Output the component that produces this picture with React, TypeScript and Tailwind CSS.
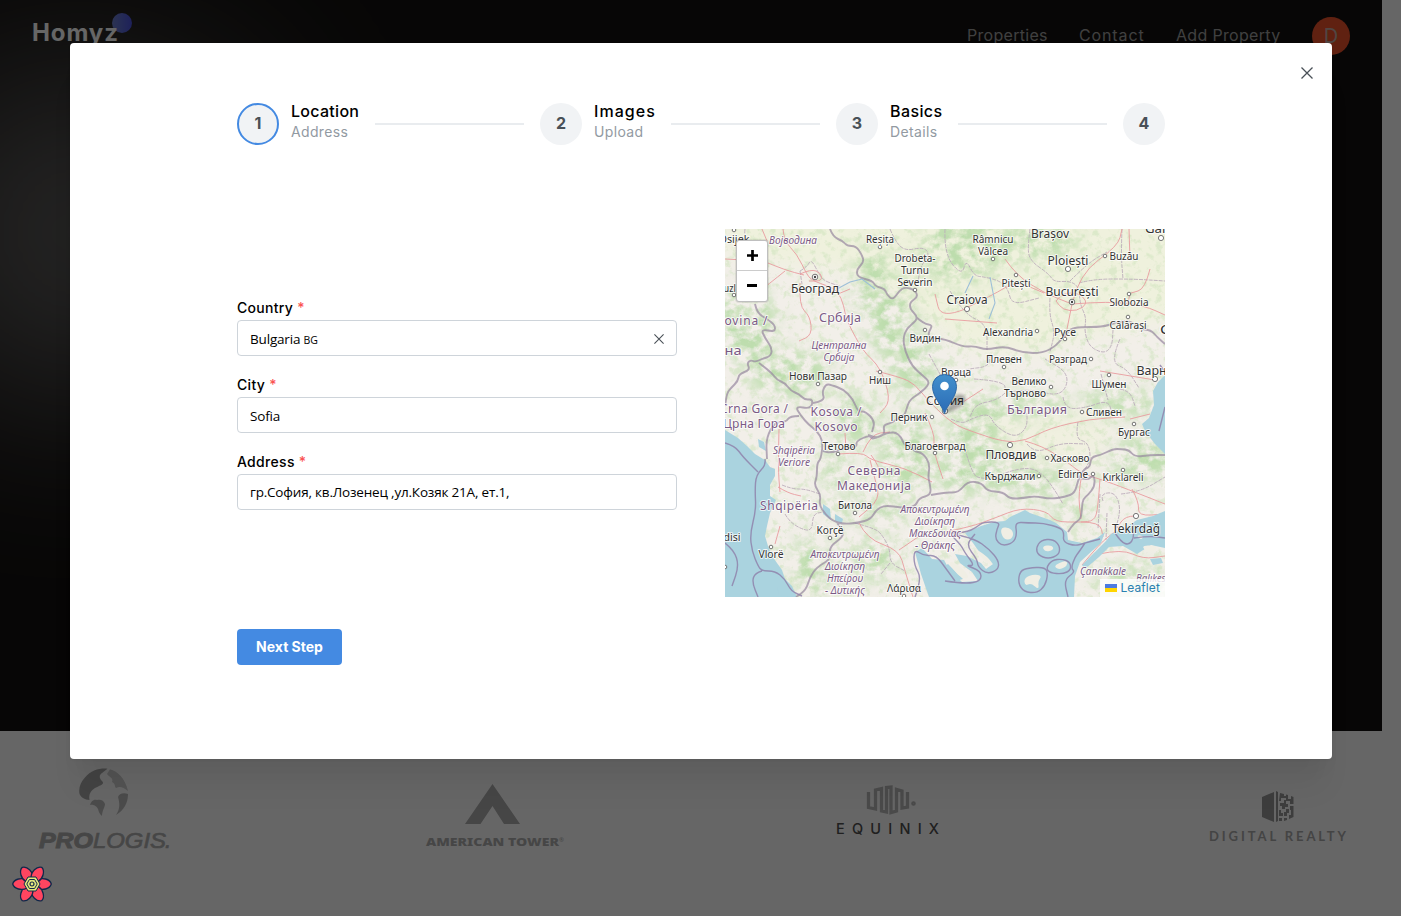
import React from "react";

const steps = [
  { n: 1, title: "Location", note: "Address", active: true, text: "w-[68px]", track: "tracking-[0.018em]" },
  { n: 2, title: "Images", note: "Upload", active: false, text: "w-[61px]", track: "tracking-[0.065em]" },
  { n: 3, title: "Basics", note: "Details", active: false, text: "w-[52px]", track: "tracking-[0.025em]" },
  { n: 4, title: "", note: "", active: false, text: "", track: "" },
];

function Close({ size }: { size: number }) {
  return (
    <svg width={size} height={size} viewBox="0 0 12 12" fill="none" stroke="#495057" strokeWidth="1.3">
      <path d="M.5.5 11.5 11.5M11.5.5.5 11.5" />
    </svg>
  );
}

function Stepper() {
  return (
    <div className="flex h-[42px] items-center">
      {steps.map((s) => (
        <React.Fragment key={s.n}>
          <div className="flex items-center">
            <div
              className={
                s.active
                  ? "flex size-[42px] items-center justify-center rounded-full border-2 border-[#448ae2] bg-[#f1f3f5] pb-0.5 text-base font-bold text-[#495057]"
                  : "flex size-[42px] items-center justify-center rounded-full bg-[#f1f3f5] pb-0.5 text-base font-bold text-[#495057]"
              }
            >
              {s.n}
            </div>
            {s.title && (
              <div className={`-mt-2 ml-3 whitespace-nowrap ${s.text}`}>
                <div className={`text-base leading-[22px] font-medium text-black ${s.track}`}>{s.title}</div>
                <div className="text-sm leading-[19px] tracking-[0.025em] text-[#929aa2]">{s.note}</div>
              </div>
            )}
          </div>
          {s.n < 4 && <div className="mx-4 h-[2px] flex-1 bg-[#e9ecef]" />}
        </React.Fragment>
      ))}
    </div>
  );
}

function Field({ label, gap, children }: { label: string; gap: string; children: React.ReactNode }) {
  return (
    <div className={gap}>
      <div className="h-[22px] text-sm leading-[21px] font-medium tracking-[0.022em] text-black">
        {label} <span className="text-[#fa5252]">*</span>
      </div>
      <div className="mt-px flex h-9 items-center justify-between rounded border border-[#ced4da] bg-white px-3 pt-px font-['Open_Sans','Noto_Sans',sans-serif] text-[13.5px] tracking-[-0.013em] text-black">
        {children}
      </div>
    </div>
  );
}

// Rounds the corners of an "M x y x y ... [Z]" path with quadratic curves.
function smooth(d: string): string {
  return d
    .split("M")
    .filter((part) => part.trim())
    .map((part) => {
      const closed = part.includes("Z");
      const n = (part.match(/-?[\d.]+/g) || []).map(Number);
      const p: [number, number][] = [];
      for (let i = 0; i + 1 < n.length; i += 2) p.push([n[i], n[i + 1]]);
      const mid = (a: [number, number], b: [number, number]) => `${(a[0] + b[0]) / 2} ${(a[1] + b[1]) / 2}`;
      if (closed) {
        const k = p.length;
        return `M${mid(p[k - 1], p[0])}` + p.map((q, i) => `Q${q[0]} ${q[1]} ${mid(q, p[(i + 1) % k])}`).join("") + "Z";
      }
      let out = `M${p[0][0]} ${p[0][1]}`;
      for (let i = 1; i < p.length - 1; i++) out += `Q${p[i][0]} ${p[i][1]} ${mid(p[i], p[i + 1])}`;
      const last = p[p.length - 1];
      return out + `L${last[0]} ${last[1]}`;
    })
    .join("");
}

type Label = [number, number, number, number, string];

// centre x, baseline y, width, font size, text
const cities: Label[] = [
  [9, 14, 31, 11, "Osijek"],
  [5, 63, 22, 11, "Tuzla"],
  [155, 14, 28, 10.5, "Reșița"],
  [190, 33, 41, 10.5, "Drobeta-"],
  [190, 45, 28, 10.5, "Turnu"],
  [190, 57, 35, 10.5, "Severin"],
  [90, 64, 48, 12.5, "Београд"],
  [200, 113, 31, 10.5, "Видин"],
  [93, 151, 58, 10.5, "Нови Пазар"],
  [155, 155, 22, 10.5, "Ниш"],
  [268, 14, 41, 10.5, "Râmnicu"],
  [268, 26, 30, 10.5, "Vâlcea"],
  [325, 9, 38, 12.5, "Brașov"],
  [343, 36, 41, 12.5, "Ploiești"],
  [399, 31, 29, 10.5, "Buzău"],
  [438, 4, 36, 12.5, "Galați"],
  [291, 58, 29, 10.5, "Pitești"],
  [347, 67, 53, 12.5, "București"],
  [242, 75, 41, 12.5, "Craiova"],
  [404, 77, 39, 10.5, "Slobozia"],
  [403, 100, 37, 10.5, "Călărași"],
  [440, 105, 10, 12, "C"],
  [283, 107, 50, 10.5, "Alexandria"],
  [340, 107, 22, 10.5, "Русе"],
  [279, 134, 36, 10.5, "Плевен"],
  [343, 134, 38, 10.5, "Разград"],
  [231, 147, 30, 10.5, "Враца"],
  [304, 156, 35, 10.5, "Велико"],
  [300, 168, 42, 10.5, "Търново"],
  [384, 159, 35, 10.5, "Шумен"],
  [430, 146, 37, 12.5, "Варна"],
  [379, 187, 36, 10.5, "Сливен"],
  [220, 176, 38, 12, "София"],
  [184, 192, 37, 10.5, "Перник"],
  [114, 221, 33, 10.5, "Тетово"],
  [210, 221, 61, 10.5, "Благоевград"],
  [286, 230, 51, 12.5, "Пловдив"],
  [345, 233, 39, 10.5, "Хасково"],
  [285, 251, 51, 10.5, "Кърджали"],
  [348, 249, 30, 10.5, "Edirne"],
  [398, 252, 41, 10.5, "Kırklareli"],
  [409, 207, 32, 10.5, "Бургас"],
  [130, 280, 34, 10.5, "Битола"],
  [105, 305, 27, 10.5, "Korçë"],
  [46, 329, 25, 10.5, "Vlorë"],
  [7, 312, 17, 10.5, "disi"],
  [411, 304, 48, 12.5, "Tekirdağ"],
  [179, 363, 34, 10.5, "Λάρισα"],
];

const countries: Label[] = [
  [115, 93, 42, 12.5, "Србија"],
  [21, 96, 43, 12, "ovina /"],
  [8, 126, 17, 12, "на"],
  [29, 184, 68, 12, "Crna Gora /"],
  [29, 199, 62, 12, "Црна Гора"],
  [111, 187, 51, 12, "Kosova /"],
  [111, 202, 43, 12, "Kosovo"],
  [149, 246, 53, 12, "Северна"],
  [149, 261, 74, 12, "Македонија"],
  [64, 281, 58, 12, "Shqipëria"],
  [312, 185, 60, 12.5, "България"],
];

const regions: Label[] = [
  [68, 15, 48, 10.5, "Војводина"],
  [114, 120, 55, 10.5, "Централна"],
  [114, 132, 31, 10.5, "Србија"],
  [69, 225, 42, 10.5, "Shqipëria"],
  [69, 237, 32, 10.5, "Veriore"],
  [210, 284, 69, 10, "Αποκεντρωμένη"],
  [210, 296, 40, 10, "Διοίκηση"],
  [210, 308, 52, 10, "Μακεδονίας"],
  [210, 320, 40, 10, "- Θράκης"],
  [120, 329, 69, 10, "Αποκεντρωμένη"],
  [120, 341, 40, 10, "Διοίκηση"],
  [120, 353, 36, 10, "Ηπείρου"],
  [120, 365, 40, 10, "- Δυτικής"],
  [378, 346, 46, 10.5, "Çanakkale"],
  [429, 353, 36, 10, "Balıkesir"],
];

const dots: [number, number, number][] = [
  [9, 1, 1.8], [9, 66, 1.8], [155, 18, 1.8], [190, 61, 1.8], [200, 101, 1.8], [93, 155, 1.8], [155, 143, 1.8],
  [268, 30, 1.8], [291, 46, 1.8], [343, 40, 2.6], [380, 27, 1.8], [436, 9, 2.6], [242, 80, 2.6], [404, 65, 1.8],
  [403, 88, 1.8], [312, 102, 1.8], [340, 110, 1.8], [279, 138, 1.8], [366, 130, 1.8], [326, 158, 1.8], [384, 146, 1.8],
  [430, 150, 2.6], [357, 183, 1.8], [207, 188, 1.8], [113, 225, 1.8], [210, 224, 1.8], [285, 216, 2.6], [322, 229, 1.8],
  [314, 247, 1.8], [368, 245, 1.8], [398, 241, 1.8], [409, 195, 1.8], [130, 284, 1.8], [105, 309, 1.8], [46, 318, 1.8],
  [411, 287, 2.6], [231, 151, 1.8], [0, 338, 1.8], [179, 367, 1.8],
];

const ADRIATIC =
  "M0 201 13 209 22 217 30 225 40 231 45 238 50 240 50 247 45 256 45 267 51 271 45 284 42 297 40 307 43 317 47 327 57 341 60 350 67 357 72 368 0 368Z";
const AEGEAN =
  "M204 368 196 345 190 323 197 319 207 330 219 331 224 340 237 353 253 352 247 343 235 334 230 325 242 327 256 334 261 340 268 335 255 324 248 314 240 304 256 297 269 293 280 292 285 288 300 281 305 284 325 291 331 294 342 303 343 311 357 314 372 309 380 303 376 314 367 322 355 333 350 347 349 368Z";
const MARMARA =
  "M440 282 428 287 412 291 398 300 386 305 381 312 369 324 357 336 360 340 374 328 384 318 398 317 412 325 426 316 440 319Z";

const SEA_BORDERS = smooth(
  "M0 214 10 217 18 228 33 243M40 230 41 236 31 246 30 262 31 281 25 305 27 322 33 337 37 342 50 342 60 350 66 362 77 367M37 342 30 344 27 353 33 368M0 314 9 321 14 337 7 357M190 368 197 350 189 336 189 320 199 327 211 326 222 341 230 352M220 352 240 355 256 352 256 342 240 336 250 337 240 324 236 316 224 304 250 310 264 320 274 332 273 341 262 345 253 338 252 330 241 316 250 305M224 304 240 304 252 298 258 293 275 293 272 300 270 310 277 317 288 314 292 306 290 293 303 294 318 294 336 299 339 304 338 313 350 317 360 314 375 310M360 314 354 323 350 328 346 339 350 343 339 351 343 368M390 304 396 313 404 316 409 309 408 295M409 309 425 307 440 309M440 143 435 136M440 178 434 202"
);
const ISLAND_BORDERS = smooth(
  "M311 319 316 311 328 310 335 317 334 326 323 330 313 326ZM321 339 327 331 337 330 345 333 346 341 338 345 325 344ZM295 342 303 339 320 338 323 345 320 357 312 364 299 363 293 354Z"
);
const STATE_BORDERS = smooth(
  "M105 0 108 8 118 12 122 17 131 17 137 26 139 33 132 40 132 48 148 52 150 57 160 60 162 66 168 71 174 62 180 58 190 61 193 68 185 73 185 80 192 87 191 92 182 99 178 109 180 122 187 137 197 146 206 154 194 165 184 171 180 186 176 187 167 194 158 196 160 205 152 209 143 206M191 88 199 95 208 96 203 104 205 109 220 110 238 118 250 117 261 121 280 117 298 124 318 124 331 117 338 108 345 100 355 98 377 98 390 94 405 91 414 100 426 101 432 108 440 115M30 75 32 84 42 90 50 96 50 103 36 100 40 109 47 119 46 127 37 130 30 133 26 131 22 134 25 141 14 145 13 152 6 159 2 164 0 177M34 134 46 143 52 151 60 154 66 162 74 165 80 171 88 170 86 180 70 177 76 187 84 196 92 202 98 212 96 230 92 234 92 248 89 256 96 266 94 276 101 286 108 292 118 295 133 294 146 290 151 281 160 276 177 279 190 278 194 269 206 266 205 255 203 248 205 235 198 224 188 222 183 211 181 219 174 204 163 203 147 211 145 206 131 212 132 218 120 219 106 224 98 222M88 174 100 172 97 163 101 155 106 156 118 160 128 170 133 183 140 182 150 192 147 203M74 187 65 187 61 193 50 193 41 209 42 230M206 266 220 263 233 264 243 252 257 254 262 262 278 263 285 270 299 269 310 267 325 270 340 268 350 264 353 251 359 240 365 238 366 228 376 226 388 220 396 220 404 221 410 228 425 226 440 226M353 248 362 252 369 245 370 257 363 266 358 270 357 278 356 290 349 294 343 303M112 294 118 301 118 308 104 318 106 330 92 338 85 348 81 361 71 368"
);
const COUNTY_BORDERS = smooth(
  "M20 0 18 20 34 28 42 45 30 58 0 62M75 42 82 38 86 30 93 43 98 51 108 55 115 57M75 42 77 55M165 0 170 12 180 22 198 18 205 25 195 38 193 55M220 0 219 25 237 47 241 30 249 47 260 48 275 52 283 60 287 76 314 69M225 62 239 85 262 95 262 122M305 0 303 15 304 31 324 45 329 53 345 52 354 58 355 75 361 88 360 98M325 69 324 85 330 103 325 123M354 54 368 50 409 50 440 52M397 0 396 25 398 50M345 52 363 34 382 23M204 125 210 136 215 145 220 155 239 140 264 138 265 125M249 150 280 152 280 164 305 160 337 168 345 145 320 130M280 164 273 171 251 175 245 188M338 168 340 180 360 179 383 171 387 184M360 100 361 115 378 125 387 118 388 101M376 145 383 171M395 110 385 133 402 140 414 159M395 160 405 162 410 177M226 190 237 195 246 190 264 184 270 197 290 209 302 199 302 184M353 193 350 210 363 213 366 230 360 240M240 220 247 245 256 250 275 248 281 243 305 238 319 246 331 263 338 275M302 215 310 225 335 214 360 215M10 256 15 235M57 256 67 260 80 260 95 265M60 285 64 292 76 300 87 302 88 285 98 283M130 294 148 299 156 304 165 320 165 334 180 342M165 334 156 345M378 272 375 265 390 263 396 280 390 302M396 265 415 263 440 248M375 265 373 300M382 284 381 311"
);
const ROADS = smooth(
  "M58 0 59 12 72 25 82 46 88 52 103 57 113 62 119 77 121 90 134 115 142 126 151 134 160 150 165 173 155 184M43 34 60 41 79 46M35 62 45 54 60 42M75 54 74 77 85 87 87 106 74 112M151 142 175 148 190 155 204 173 228 195 248 203 279 213 300 212 325 199 365 190 400 188M280 30 291 46 319 64 347 75M347 75 386 72 420 77 440 86M347 75 354 45 393 17 397 0M347 75 340 110M239 80 268 66 291 52 319 64M220 90 272 94M405 65 402 77M375 142 430 151M404 0 405 30M425 40 420 60 406 64M238 173 258 160M113 225 138 223 145 231 180 239 207 253M138 223 146 205 165 203M145 231 150 250 155 270 134 288M146 226 155 238 154 250M200 184 210 205 208 220 218 250M53 258 63 264 76 267M54 200 53 239 55 263M55 297 50 315M120 204 121 222M300 212 318 217 345 235 357 245 375 250 402 260 440 275M357 245 353 264 356 290M375 250 373 280 369 292 356 293M356 293 375 293 378 308M220 303 245 298 270 289 295 279 322 282 330 293 356 293M374 325 397 320 418 330 440 327M357 336 375 314 391 302M407 260 414 273 413 287 440 285M134 294 142 310 174 321 180 342 188 368M174 321 193 308M410 287 400 287 392 299M405 190 425 185M240 80 216 90 210 65M0 30 38 32M37 0 42 12M113 65 125 60M331 72 335 66 347 63 358 67 362 75 352 82 338 81 331 72M75 45 86 40 96 44 97 52 84 52"
);

const greens: [number, number, number, number][] = [
  [148, 52, 20, 36], [165, 90, 26, 38], [235, 20, 42, 35], [300, 12, 55, 20], [188, 137, 24, 30], [20, 95, 32, 40],
  [65, 145, 42, 24], [130, 190, 22, 28], [180, 225, 26, 42], [250, 208, 28, 32], [283, 177, 62, 12], [245, 245, 40, 20],
  [305, 252, 40, 16], [420, 230, 36, 22], [395, 175, 42, 13], [145, 280, 40, 12], [85, 340, 18, 35], [110, 240, 12, 24],
  [150, 330, 22, 22], [410, 350, 40, 14], [345, 283, 22, 12],
];

function Labels({ items, kind }: { items: Label[]; kind: "city" | "country" | "region" }) {
  return (
    <g
      fontFamily="'Noto Sans', sans-serif"
      fill={kind === "city" ? "#333333" : "#7b5a86"}
      fontStyle={kind === "region" ? "italic" : "normal"}
      stroke="#ffffff"
      strokeOpacity="0.75"
      strokeWidth="2"
      strokeLinejoin="round"
      paintOrder="stroke"
      textAnchor="middle"
    >
      {items.map(([x, y, w, s, t]) => (
        <text key={t + x + y} x={x} y={y} fontSize={s} textLength={w} lengthAdjust={kind === "country" && t.length > 2 ? "spacing" : "spacingAndGlyphs"}>
          {t}
        </text>
      ))}
    </g>
  );
}

function BalkanMap() {
  return (
    <svg className="block" width="440" height="368" viewBox="0 0 440 368">
      <defs>
        <filter id="soft" x="-30%" y="-30%" width="160%" height="160%">
          <feGaussianBlur stdDeviation="9" />
        </filter>
        <filter id="forest" x="0" y="0" width="100%" height="100%" colorInterpolationFilters="sRGB">
          <feTurbulence type="fractalNoise" baseFrequency="0.08 0.1" numOctaves="5" seed="8" />
          <feColorMatrix values="0 0 0 0 0.74  0 0 0 0 0.865  0 0 0 0 0.68  3.2 0 0 0 -1.15" />
        </filter>
        <filter id="speck" x="0" y="0" width="100%" height="100%" colorInterpolationFilters="sRGB">
          <feTurbulence type="fractalNoise" baseFrequency="0.13" numOctaves="4" seed="21" />
          <feColorMatrix values="0 0 0 0 0.8  0 0 0 0 0.89  0 0 0 0 0.73  5 0 0 0 -2.6" />
        </filter>
        <mask id="woods">
          <g fill="#fff" filter="url(#soft)">
            {greens.map(([x, y, rx, ry]) => (
              <ellipse key={x + "-" + y} cx={x} cy={y} rx={rx} ry={ry} />
            ))}
          </g>
        </mask>
      </defs>
      <rect width="440" height="368" fill="#f2efe9" />
      <path filter="url(#soft)" fill="#eff1dd" d="M0-20H460V85L400 100 350 108 310 124 240 118 200 90 165 65 120 40 60 35 0 25Z" />
      <path filter="url(#soft)" fill="#f0f0e0" d="M245 190 330 175 390 190 370 235 290 240Z" />
      <g mask="url(#woods)">
        <rect width="440" height="368" filter="url(#forest)" />
      </g>
      <rect width="440" height="368" filter="url(#speck)" opacity="0.5" />

      <path d={COUNTY_BORDERS} fill="none" stroke="#bcaebb" strokeWidth="0.9" strokeDasharray="4 1" />
      <path d={ROADS} fill="none" stroke="#e99c9f" strokeWidth="0.9" />

      <path d={ADRIATIC} fill="#aad3df" />
      <path d={AEGEAN} fill="#aad3df" />
      <path d={MARMARA} fill="#aad3df" />
      <path fill="#aad3df" d="M440 146 433 153 428 162 429 176 424 189 417 195 420 202 430 215 440 225Z M33 210 39 213 41 222 34 218Z M98 275 105 280 106 291 98 285Z M110 285 118 290 117 294 110 292Z M425 330 436 329 438 334 428 336Z M215 340 223 335 238 350 231 352Z M52 357 66 358 68 368 54 366Z" />
      <g fill="#f0eee4">
        <path d={smooth("M275 299 284 298 289 304 286 311 278 310ZM317 317 327 316 329 321 320 323ZM328 337 341 331 343 336 335 341ZM299 349 309 345 317 347 313 352 314 361 306 354 300 357ZM248 318 263 328 269 337 260 333 253 324ZM222 332 232 334 246 349 236 350ZM417 316 433 317 429 323 420 322ZM411 306 419 307 416 311Z")} />
      </g>

      <path d={SEA_BORDERS} fill="none" stroke="#8f83ac" strokeWidth="1.4" opacity="0.85" />
      <path d={ISLAND_BORDERS} fill="none" stroke="#8f83ac" strokeWidth="1.4" opacity="0.85" />
      <path d={STATE_BORDERS} fill="none" stroke="#97879f" strokeOpacity="0.7" strokeWidth="1.9" strokeLinejoin="round" />
      <path d="M112 60 125 53 137 50 150 60 M265 48 270 74 264 90M240 64 248 47" fill="none" stroke="#9dbfd8" strokeWidth="1.1" />

      <g fill="#fff" stroke="#666" strokeWidth="0.9">
        {dots.map(([x, y, r]) => (
          <circle key={x + "-" + y} cx={x} cy={y} r={r} />
        ))}
        <circle cx="90" cy="48" r="2.8" />
        <circle cx="347" cy="73" r="2.8" />
        <circle cx="220" cy="182" r="2.8" />
      </g>
      <g fill="#444">
        <circle cx="90" cy="48" r="1.2" />
        <circle cx="347" cy="73" r="1.2" />
      </g>
      <Labels items={regions} kind="region" />
      <Labels items={countries} kind="country" />
      <Labels items={cities} kind="city" />

      <defs>
        <linearGradient id="pin" x1="0" y1="0" x2="0" y2="1">
          <stop offset="0" stopColor="#4290cd" />
          <stop offset="1" stopColor="#2b6bb5" />
        </linearGradient>
        <filter id="pinshade" x="-30%" y="-30%" width="160%" height="160%">
          <feGaussianBlur stdDeviation="1.8" />
        </filter>
      </defs>
      <path d="M220 184 227 170C232 162 243 165 240 172 238 178 229 182 220 184Z" fill="#000" opacity="0.28" filter="url(#pinshade)" />
      <path d="M219.5 184.5C217 176 207.5 168 207.5 157.5a12 12 0 0 1 24 0C231.500 168 222 176 219.500 184.500Z" fill="url(#pin)" stroke="#2e6aa8" />
      <circle cx="219.500" cy="157" r="4.300" fill="#fff" />
    </svg>
  );
}

function MapPanel() {
  return (
    <div className="relative h-[368px] w-[440px] overflow-hidden bg-[#f2efe9]">
      <BalkanMap />
      <div className="absolute top-[11px] left-[11px] w-8 rounded-[3px] border border-black/25 bg-white shadow-[0_0_0_1px_rgba(0,0,0,0.08)]">
        <div className="flex h-[30px] items-center justify-center border-b border-[#ccc]">
          <svg width="11" height="11" viewBox="0 0 11 11" stroke="#000" strokeWidth="2.700">
            <path d="M0 5.500H11M5.500 0V11" />
          </svg>
        </div>
        <div className="flex h-[30px] items-center justify-center pb-[2px]">
          <svg width="10" height="3" viewBox="0 0 10 3" fill="#000">
            <path d="M0 0H10V3H0Z" />
          </svg>
        </div>
      </div>
      <div className="absolute right-0 bottom-0 flex h-[18px] items-center bg-white/80 px-[5px] text-xs leading-[18px] text-[#2a80b0]">
        <svg className="mr-[3px]" width="12" height="8" viewBox="0 0 12 8">
          <path fill="#4c7be1" d="M0 0h12v4H0z" />
          <path fill="#ffd500" d="M0 4h12v4H0z" />
        </svg>
        <span className="tracking-[0.008em]">Leaflet</span>
      </div>
    </div>
  );
}

function Partners() {
  return (
    <div className="grid h-[185px] grid-cols-[388px_410px_373px_137px] items-start pt-9 pl-[38px]">
      <div className="flex w-[133px] flex-col pt-px">
        <svg className="ml-[41px]" width="50" height="49" viewBox="0 0 50 49">
          <path fill="#a8a8a8" d="M28.500.700C21 0 12 2 6 9.500 1 15 0 20 .3 25 1 29 6 32 10.500 32 9.500 26 12 22 17 19.500 22 17 26 16 23 13 20 10 20 7 23 5Z" />
          <path fill="#cfcfcf" d="M31 1.300C38 3 46 10 49 23 44 19 41 18 37 20 35 18 37 16 33 14 35 10 30 9 28 6Z" />
          <path fill="#bcbcbc" d="M49 26C44 24 40 26 39 29 41 36 41 41 37 47 45 42 49 35 49 26Z M18 32C14 31 12 34 11 37 15 36 18 39 19 41 20 45 21 46 23 48 23 43 26 39 26 36 25 32 21 31 18 32Z" />
        </svg>
        <svg className="mt-[9px] overflow-visible" width="133" height="24" viewBox="0 0 133 24" fontFamily="'Liberation Sans', sans-serif" fontStyle="italic" fontSize="22.500" fill="#b0b0b0">
          <text x="1" y="22" fontWeight="bold" textLength="54" lengthAdjust="spacingAndGlyphs" stroke="#b0b0b0" strokeWidth="1">PRO</text>
          <text x="55" y="22" textLength="73" lengthAdjust="spacingAndGlyphs" stroke="#b0b0b0" strokeWidth="0.700">LOGIS</text>
          <text x="127" y="22" stroke="#b0b0b0" strokeWidth="0.700">.</text>
        </svg>
      </div>
      <div className="mt-[17px] w-[138px]">
        <svg className="ml-[39px]" width="55" height="41" viewBox="0 0 55 41">
          <path fill="#aeaeae" d="M27.500 0 55 40H39L27.500 22 15.500 40H0Z" />
        </svg>
        <svg className="mt-[11px] overflow-visible" width="139" height="14" viewBox="0 0 139 14" fontFamily="'Noto Sans', sans-serif" fill="#b0b0b0">
          <text x="0" y="10" fontSize="10.500" fontWeight="900" textLength="133" lengthAdjust="spacingAndGlyphs">AMERICAN TOWER</text>
          <text x="133" y="6" fontSize="6">®</text>
        </svg>
      </div>
      <div className="mt-[18px] w-[104px]">
        <svg className="ml-[30px]" width="54" height="33" viewBox="0 0 54 33" fill="none" stroke="#b8b8b8" strokeWidth="3.300">
          <path d="M2.500 7V22.500L9.500 24V5L15.500 3.500V26L20.500 27V2.500L25 2V27.500L30.500 26V4.500L36 6V23L41.500 22V7" />
          <circle cx="47.500" cy="18.500" r="1.300" strokeWidth="2" />
        </svg>
        <svg className="mt-[3px] overflow-visible" width="105" height="18" viewBox="0 0 105 18">
          <text x="0" y="12.500" fontFamily="Inter, sans-serif" fontSize="14.500" fontWeight="500" fill="#505050" textLength="103">EQUINIX</text>
        </svg>
      </div>
      <div className="mt-6 w-[137px]">
        <svg className="ml-[53px]" width="33" height="32" viewBox="0 0 33 32" fill="#999">
          <path d="M0 6 12 1V31L0 26ZM14 0 16 1V30L14 31Z" />
          <path d="M18 2 22 3V7H19V10H17ZM24 3.500 26 4V8H29V5L31.500 6V13H28V10H24V7H22V5H24ZM18 12H22V9H24V13H26V16H23V18H20V15H18ZM28 15H31.500V26L27 28V24H29V19H28ZM24 18H27V22H25V25H22V21H24ZM17 19H19V22H21V25H17ZM17 27H20V30H17ZM22 27H25V29L22 30Z" />
        </svg>
        <svg className="mt-[6px] overflow-visible" width="138" height="18" viewBox="0 0 138 18">
          <text x="0" y="12" fontFamily="Lato, sans-serif" fontSize="13" fontWeight="700" fill="#aaaaaa" textLength="137">DIGITAL REALTY</text>
        </svg>
      </div>
    </div>
  );
}

function QueryFlower() {
  return (
    <svg className="absolute top-[864px] left-3" width="40" height="40" viewBox="-20 -20 40 40">
      <g fill="#ff4560" stroke="#10284a" strokeWidth="1.300">
        {[0, 60, 120, 180, 240, 300].map((a) => (
          <path key={a} transform={`rotate(${a})`} d="M5-4C10-7 18-5 19.300 0 18 5 10 7 5 4Z" />
        ))}
      </g>
      <g fill="#e3e67c" stroke="#10284a">
        <path strokeWidth="1" d="M-8 0-4-7H4L8 0 4 7H-4Z" />
        <path strokeWidth="1" d="M-5.200 0-2.600-4.500H2.600L5.200 0 2.600 4.500H-2.600Z" />
        <circle r="2" strokeWidth="1.200" />
      </g>
    </svg>
  );
}

export default function App() {
  return (
    <div className="relative h-[916px] w-[1401px] overflow-hidden bg-white font-[Inter,sans-serif]">
      <div className="relative h-[731px] w-[1382px] overflow-hidden bg-[#131110]">
        <div className="absolute top-[72px] -left-20 size-80 rounded-[100px] bg-white/35 blur-[100px]" />
        <header className="relative flex h-[72px] items-center justify-between px-8">
          <div className="relative h-[42px] w-[100px]">
            <div className="absolute -top-[2px] left-20 size-5 rounded-full bg-linear-to-r from-[#6f80cc] to-[#4c52e0]" />
            <div className="relative text-[24px] leading-[35px] font-bold tracking-[0.037em] text-white">Homyz</div>
          </div>
          <nav className="flex items-center text-base text-[#a0a0a0]">
            <span className="w-[112px] pb-0.5 tracking-[0.018em]">Properties</span>
            <span className="w-[97px] pb-0.5 tracking-[0.055em]">Contact</span>
            <span className="w-[136px] pb-0.5 tracking-[0.020em]">Add Property</span>
            <span className="flex size-[38px] items-center justify-center rounded-full bg-[#f0532c] text-xl text-[#c8b0a8]">
              D
            </span>
          </nav>
        </header>
      </div>
      <Partners />
      <div className="absolute inset-0 bg-black/60" />
      <QueryFlower />
      <section className="absolute top-[43px] left-[70px] h-[716px] w-[1262px] rounded bg-white pt-[60px] pr-[167px] pl-[167px] shadow-[0_1px_3px_rgba(0,0,0,0.05),0_36px_28px_-7px_rgba(0,0,0,0.05),0_17px_17px_-7px_rgba(0,0,0,0.04)]">
        <button className="absolute top-6 right-[19px]" aria-label="Close">
          <Close size={12} />
        </button>
        <Stepper />
        <div className="mt-[84px] flex justify-between">
          <div className="w-[440px] pt-[68px]">
            <Field label="Country" gap="mb-[18px]">
              <span className="pt-px">
                Bulgaria <span className="text-[10.5px]">BG</span>
              </span>
              <Close size={10} />
            </Field>
            <Field label="City" gap="mb-[18px]">
              <span className="pt-px">Sofia</span>
            </Field>
            <Field label="Address" gap="">
              <span className="tracking-[-0.014em]">гр.София, кв.Лозенец ,ул.Козяк 21А, ет.1,</span>
            </Field>
          </div>
          <MapPanel />
        </div>
        <button className="mt-8 flex h-9 w-[105px] items-center justify-center rounded bg-[#448ae2] text-sm font-bold text-white">
          Next Step
        </button>
      </section>
    </div>
  );
}
